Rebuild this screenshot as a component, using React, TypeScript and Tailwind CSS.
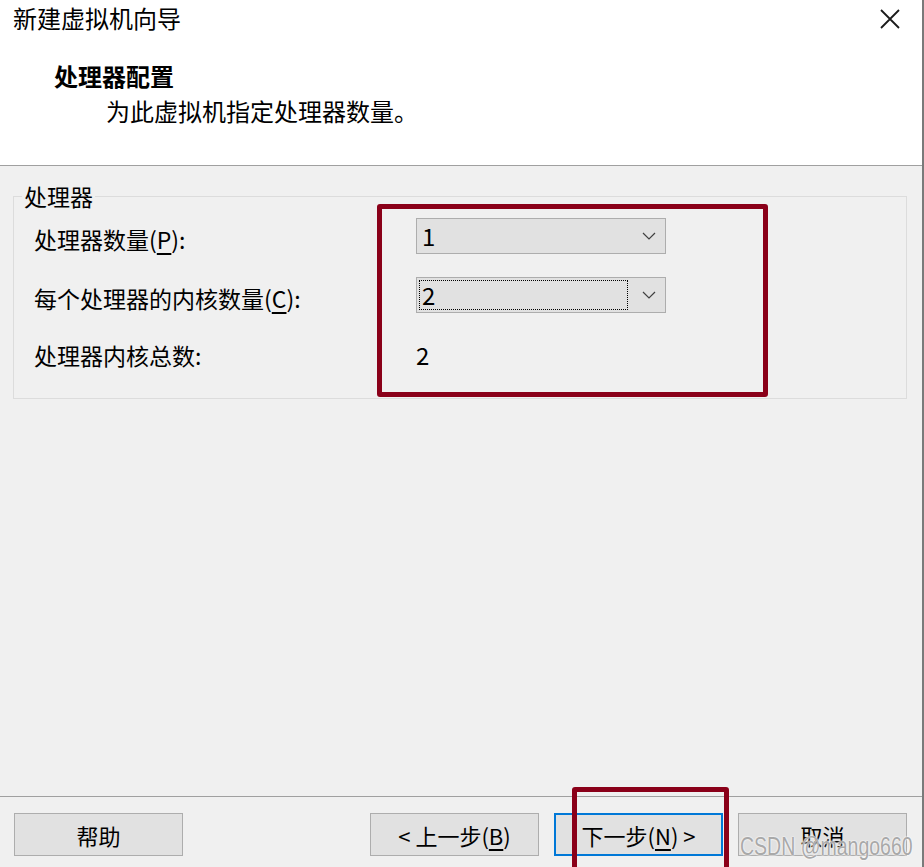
import { useState } from 'react';

const FONT = "font-['Microsoft_YaHei','Noto_Sans_CJK_SC',sans-serif]";

function Chevron() {
  return (
    <svg width="14" height="8" viewBox="0 0 14 8" fill="none" className="shrink-0">
      <path d="M1 1l6 6 6-6" stroke="#404040" strokeWidth="1.2" />
    </svg>
  );
}

function ComboBox({ value, focused = false, className = '' }: { value: string; focused?: boolean; className?: string }) {
  return (
    <div
      className={`flex w-[250px] items-center border border-[#adadad] bg-[#e1e1e1] pl-[2px] pr-[9px] text-[24px] text-black ${className}`}
    >
      <div
        className={`flex h-[calc(100%-4px)] flex-1 items-center pl-[2px] leading-none ${
          focused ? 'border border-dotted border-black' : 'border border-transparent'
        }`}
      >
        {value}
      </div>
      <div className="flex w-[28px] justify-end">
        <Chevron />
      </div>
    </div>
  );
}

function DialogButton({
  children,
  focused = false,
}: {
  children: React.ReactNode;
  focused?: boolean;
}) {
  return (
    <button
      type="button"
      className={`flex h-[43px] w-[169px] items-center justify-center bg-[#e1e1e1] text-[22px] leading-none text-black ${
        focused ? 'border-2 border-[#0078d7]' : 'border border-[#adadad]'
      }`}
    >
      {children}
    </button>
  );
}

export default function App() {
  const [processors] = useState('1');
  const [cores] = useState('2');
  const total = String(Number(processors) * Number(cores));

  return (
    <div className={`relative flex h-[867px] w-[924px] flex-col overflow-hidden border-r-2 border-[#7a7a7a] bg-[#f0f0f0] ${FONT}`}>
      {/* header */}
      <header className="h-[166px] shrink-0 border-b border-[#a0a0a0] bg-white">
        <div className="flex items-center justify-between pl-[13px] pr-[22px] pt-[2px]">
          <h1 className="text-[24px] leading-[32px] text-black">新建虚拟机向导</h1>
          <svg width="20" height="20" viewBox="0 0 20 20" className="mt-[1px]">
            <path d="M1 1l18 18M19 1L1 19" stroke="#1a1a1a" strokeWidth="1.8" />
          </svg>
        </div>
        <div className="pl-[54px] pt-[25px] text-[24px] font-bold leading-[34px] text-black">处理器配置</div>
        <div className="pl-[106px] pt-[1px] text-[24px] leading-[34px] text-black">为此虚拟机指定处理器数量。</div>
      </header>

      {/* body */}
      <main className="flex-1 px-[13px] pt-[30px]">
        <section className="relative h-[203px] w-[894px] border border-[#dcdcdc]">
          <span className="absolute -top-[18px] left-[8px] bg-[#f0f0f0] px-[2px] text-[23px] leading-[34px] text-black">
            处理器
          </span>
          <div className="flex flex-col pt-[21px] text-[23px] text-black">
            <div className="flex h-[36px] items-center">
              <label className="w-[402px] pl-[20px] pt-[6px] leading-none">
                处理器数量(<span className="underline underline-offset-4">P</span>):
              </label>
              <ComboBox value={processors} className="h-[36px]" />
            </div>
            <div className="mt-[23px] flex h-[36px] items-center">
              <label className="w-[402px] pl-[20px] pt-[6px] leading-none">
                每个处理器的内核数量(<span className="underline underline-offset-4">C</span>):
              </label>
              <ComboBox value={cores} focused className="h-[36px]" />
            </div>
            <div className="mt-[24px] flex h-[36px] items-center">
              <span className="w-[402px] pl-[20px] leading-none">处理器内核总数:</span>
              <span className="text-[24px] leading-none">{total}</span>
            </div>
          </div>
        </section>
      </main>

      {/* footer */}
      <footer className="flex h-[71px] shrink-0 items-start border-t border-[#a0a0a0] pl-[14px] pt-[16px]">
        <DialogButton>帮助</DialogButton>
        <div className="ml-[187px] flex gap-[15px]">
          <DialogButton>
            &lt; 上一步(<span className="underline underline-offset-4">B</span>)
          </DialogButton>
          <DialogButton focused>
            下一步(<span className="underline underline-offset-4">N</span>) &gt;
          </DialogButton>
          <DialogButton>取消</DialogButton>
        </div>
      </footer>

      {/* annotations */}
      <div className="pointer-events-none absolute left-[377px] top-[204px] h-[193px] w-[391px] rounded-[3px] border-[5px] border-[#8a0019]" />
      <div className="pointer-events-none absolute left-[572px] top-[787px] h-[90px] w-[157px] rounded-[3px] border-[5px] border-[#8a0019]" />
      <div className="pointer-events-none absolute left-[740px] top-[834px] origin-left scale-x-[0.78] whitespace-nowrap font-['Liberation_Sans',sans-serif] text-[25px] leading-none text-[#a9a9a9] [text-shadow:0_0_2px_#ffffff,0_0_2px_#ffffff]">
        CSDN @mango660
      </div>
    </div>
  );
}
